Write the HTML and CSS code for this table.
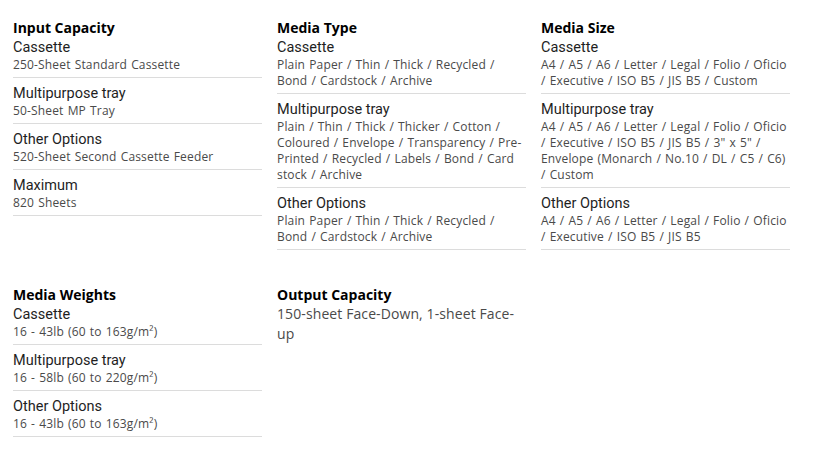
FILE: index.html
```html
<!DOCTYPE html>
<html>
<head>
<meta charset="utf-8">
<link rel="stylesheet" href="styles.css">
</head>
<body>
<div class="specs">
  <section class="spec">
    <h3 class="spec-title">Input Capacity</h3>
    <div class="item"><div class="item-name">Cassette</div><div class="item-value">250-Sheet Standard Cassette</div></div>
    <div class="item"><div class="item-name">Multipurpose tray</div><div class="item-value">50-Sheet MP Tray</div></div>
    <div class="item"><div class="item-name">Other Options</div><div class="item-value">520-Sheet Second Cassette Feeder</div></div>
    <div class="item"><div class="item-name">Maximum</div><div class="item-value">820 Sheets</div></div>
  </section>
  <section class="spec">
    <h3 class="spec-title">Media Type</h3>
    <div class="item"><div class="item-name">Cassette</div><div class="item-value">Plain Paper / Thin / Thick / Recycled / Bond / Cardstock / Archive</div></div>
    <div class="item"><div class="item-name">Multipurpose tray</div><div class="item-value">Plain / Thin / Thick / Thicker / Cotton / Coloured / Envelope / Transparency / Pre-Printed / Recycled / Labels / Bond / Card stock / Archive</div></div>
    <div class="item"><div class="item-name">Other Options</div><div class="item-value">Plain Paper / Thin / Thick / Recycled / Bond / Cardstock / Archive</div></div>
  </section>
  <section class="spec">
    <h3 class="spec-title">Media Size</h3>
    <div class="item"><div class="item-name">Cassette</div><div class="item-value">A4 / A5 / A6 / Letter / Legal / Folio / Oficio / Executive / ISO B5 / JIS B5 / Custom</div></div>
    <div class="item"><div class="item-name">Multipurpose tray</div><div class="item-value">A4 / A5 / A6 / Letter / Legal / Folio / Oficio / Executive / ISO B5 / JIS B5 / 3" x 5" / Envelope (Monarch / No.10 / DL / C5 / C6) / Custom</div></div>
    <div class="item"><div class="item-name">Other Options</div><div class="item-value">A4 / A5 / A6 / Letter / Legal / Folio / Oficio / Executive / ISO B5 / JIS B5</div></div>
  </section>
  <section class="spec">
    <h3 class="spec-title">Media Weights</h3>
    <div class="item"><div class="item-name">Cassette</div><div class="item-value">16 - 43lb (60 to 163g/m²)</div></div>
    <div class="item"><div class="item-name">Multipurpose tray</div><div class="item-value">16 - 58lb (60 to 220g/m²)</div></div>
    <div class="item"><div class="item-name">Other Options</div><div class="item-value">16 - 43lb (60 to 163g/m²)</div></div>
  </section>
  <section class="spec">
    <h3 class="spec-title">Output Capacity</h3>
    <div class="plain-value">150-sheet Face-Down, 1-sheet Face-up</div>
  </section>
</div>
</body>
</html>
```
FILE: styles.css
```css
body {
  margin: 0;
  background: #fff;
  font-family: "Open Sans", "Noto Sans", sans-serif;
}
.specs {
  display: grid;
  grid-template-columns: repeat(3, 249px);
  column-gap: 15px;
  row-gap: 36px;
  padding: 19px 13px 0;
  align-items: start;
}
.spec-title {
  margin: 0;
  font-size: 14px;
  line-height: 18px;
  font-weight: 700;
  color: #000;
}
.item {
  padding: 6px 0 4px;
  border-bottom: 1px solid #dcdcdc;
}
.item:first-of-type {
  padding-top: 1px;
}
.item-name {
  font-family: Roboto, "Open Sans", sans-serif;
  font-size: 14.5px;
  line-height: 19px;
  font-weight: 400;
  color: #1f1f1f;
}
.item-value {
  font-size: 12px;
  line-height: 16px;
  letter-spacing: 0.16px;
  word-spacing: 0.8px;
  color: #4a4a4a;
}
.plain-value {
  font-size: 14px;
  line-height: 20px;
  letter-spacing: 0.1px;
  color: #4a4a4a;
}
```
